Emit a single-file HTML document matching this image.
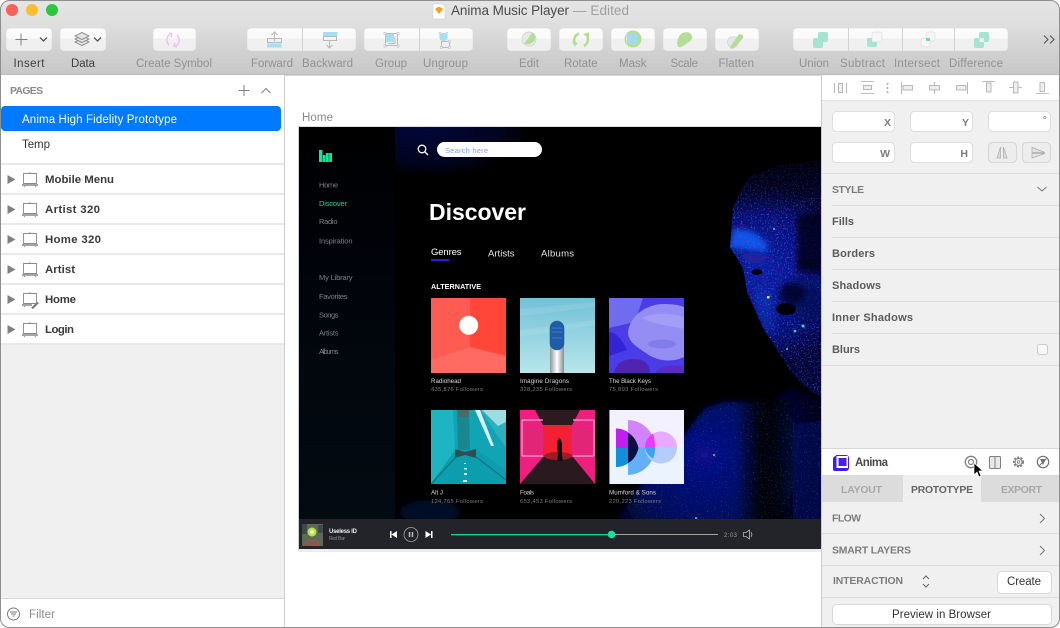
<!DOCTYPE html>
<html><head><meta charset="utf-8"><title>Anima Music Player</title>
<style>
html,body{margin:0;padding:0;background:#fff;width:1060px;height:628px;overflow:hidden}
svg{display:block}
text{font-family:"Liberation Sans",sans-serif;white-space:pre}
.tl{font-size:11.5px;fill:#929292}
.td{font-size:11.5px;fill:#3e3e3e}
.ly{font-size:11.4px;font-weight:bold;fill:#3a3a3a}
.sec{font-size:10.4px;font-weight:bold;fill:#7c7c7c}
.rw{font-size:11px;font-weight:bold;fill:#5a5a5a}
.nav{font-size:7.5px;fill:#7d8288}
.nm{font-size:6.2px;fill:#d8d8d8}
.fo{font-size:5.8px;fill:#7e7e7e}
.inp{font-size:10.5px;font-weight:bold;fill:#7c7c7c;text-anchor:end}
</style></head><body>
<svg width="1060" height="628" viewBox="0 0 1060 628" xmlns="http://www.w3.org/2000/svg">
<defs>
<clipPath id="win"><rect x="0" y="0" width="1060" height="628" rx="9"/></clipPath>
<clipPath id="ab"><rect x="299" y="127" width="522" height="392"/></clipPath>
<clipPath id="face"><polygon points="733,208 741,190 750,176 780,165 821,160 821,397 807,388 793,375 763,328 747,292 743,268 730,247"/></clipPath>
<clipPath id="body"><polygon points="625,519 650,480 680,440 705,408 723,402 775,402 790,387 821,399 821,519"/></clipPath>
<linearGradient id="tb" x1="0" y1="0" x2="0" y2="1"><stop offset="0" stop-color="#e5e5e5"/><stop offset=".35" stop-color="#dedede"/><stop offset=".7" stop-color="#d0d0d0"/><stop offset="1" stop-color="#c8c8c8"/></linearGradient>
<linearGradient id="btn" x1="0" y1="0" x2="0" y2="1"><stop offset="0" stop-color="#fbfbfb"/><stop offset=".45" stop-color="#fafafa"/><stop offset=".46" stop-color="#f0f0f0"/><stop offset="1" stop-color="#efefef"/></linearGradient>
<linearGradient id="side" x1="0" y1="0" x2="0" y2="1"><stop offset="0" stop-color="#000"/><stop offset=".35" stop-color="#01030a"/><stop offset="1" stop-color="#030b12"/></linearGradient>
<radialGradient id="blob" cx=".25" cy="0" r=".8"><stop offset="0" stop-color="#02063a"/><stop offset=".7" stop-color="#010420"/><stop offset="1" stop-color="#000"/></radialGradient>
<linearGradient id="sky" x1="0" y1="0" x2="0" y2="1"><stop offset="0" stop-color="#72c0d8"/><stop offset="1" stop-color="#b8e6ea"/></linearGradient>
<linearGradient id="cyl" x1="0" y1="0" x2="1" y2="0"><stop offset="0" stop-color="#8d9698"/><stop offset=".5" stop-color="#fff"/><stop offset="1" stop-color="#8a8a8a"/></linearGradient>
<radialGradient id="fg" gradientUnits="userSpaceOnUse" cx="762" cy="275" r="90"><stop offset="0" stop-color="#0a1fa8"/><stop offset=".65" stop-color="#06107a"/><stop offset="1" stop-color="#020538"/></radialGradient>
<radialGradient id="bg" gradientUnits="userSpaceOnUse" cx="705" cy="455" r="115"><stop offset="0" stop-color="#07128a"/><stop offset=".6" stop-color="#040b5c"/><stop offset="1" stop-color="#01031a"/></radialGradient>
<linearGradient id="sh" x1="0" y1="0" x2="1" y2="0"><stop offset="0" stop-color="#000" stop-opacity="0"/><stop offset=".45" stop-color="#000" stop-opacity=".9"/><stop offset=".75" stop-color="#000" stop-opacity=".8"/><stop offset="1" stop-color="#000" stop-opacity=".2"/></linearGradient>
<linearGradient id="topf" x1="0" y1="0" x2="0" y2="1"><stop offset="0" stop-color="#000" stop-opacity=".85"/><stop offset=".6" stop-color="#000" stop-opacity=".4"/><stop offset="1" stop-color="#000" stop-opacity="0"/></linearGradient>
<filter id="s1" x="0" y="0" width="100%" height="100%" color-interpolation-filters="sRGB"><feTurbulence type="fractalNoise" baseFrequency=".7" numOctaves="1" seed="4"/><feColorMatrix values="0 0 0 0 .15 0 0 0 0 .45 0 0 0 0 1 10 0 0 0 -6.2"/></filter>
<filter id="s2" x="0" y="0" width="100%" height="100%" color-interpolation-filters="sRGB"><feTurbulence type="fractalNoise" baseFrequency=".75" numOctaves="1" seed="11"/><feColorMatrix values="0 0 0 0 .65 0 0 0 0 .1 0 0 0 0 .8 12 0 0 0 -7.9"/></filter>
<filter id="s3" x="0" y="0" width="100%" height="100%" color-interpolation-filters="sRGB"><feTurbulence type="fractalNoise" baseFrequency=".8" numOctaves="1" seed="23"/><feColorMatrix values="0 0 0 0 .3 0 0 0 0 .8 0 0 0 0 .5 14 0 0 0 -10"/></filter>
<filter id="bl3"><feGaussianBlur stdDeviation="3"/></filter>
<filter id="bl6"><feGaussianBlur stdDeviation="6"/></filter>
</defs>

<g clip-path="url(#win)">
<rect width="1060" height="628" fill="#fff"/>

<!-- TITLE + TOOLBAR -->
<rect width="1060" height="75" fill="url(#tb)"/>
<rect y="74.500" width="1060" height="1" fill="#b2b2b2"/>
<circle cx="12" cy="10" r="6" fill="#fe5f57"/><circle cx="32" cy="10" r="6" fill="#febc2e"/><circle cx="52" cy="10" r="6" fill="#28c840"/>
<path d="M433 4h9l3 3v12h-12z" fill="#fff" stroke="#ccc" stroke-width=".5"/><path d="M435 9l3-2h2l3 2-4 5z" fill="#f8a024"/>
<text x="451" y="15" font-size="13.500" fill="#4b4b4b" textLength="118">Anima Music Player</text>
<text x="573" y="15" font-size="13.500" fill="#a0a0a0" textLength="56">— Edited</text>

<g fill="url(#btn)" stroke="#d6d6d6" stroke-width=".5">
<rect x="6" y="28" width="46" height="23" rx="4"/><rect x="60" y="28" width="46" height="23" rx="4"/>
<rect x="153" y="28" width="43" height="23" rx="4"/>
<rect x="247" y="28" width="109" height="23" rx="4"/><rect x="364" y="28" width="109" height="23" rx="4"/>
<rect x="507" y="28" width="44" height="23" rx="4"/><rect x="559" y="28" width="44" height="23" rx="4"/><rect x="611" y="28" width="44" height="23" rx="4"/><rect x="663" y="28" width="44" height="23" rx="4"/><rect x="715" y="28" width="44" height="23" rx="4"/>
<rect x="793" y="28" width="215" height="23" rx="4"/>
</g>
<g stroke="#d2d2d2" stroke-width="1"><path d="M302.500 28v23M419.500 28v23M848.500 28v23M902.500 28v23M954.500 28v23"/></g>

<!-- toolbar icons -->
<path d="M21 33.500v12M15.500 39.500h12" stroke="#808080" fill="none"/>
<path d="M40 37.500l3.500 3.500 3.500-3.500M94 37.500l3.500 3.500 3.500-3.500" stroke="#555" stroke-width="1.300" fill="none"/>
<g fill="#e4e4e4" stroke="#808080" stroke-width=".8"><path d="M75 42l7 3.500 7-3.500-7-3.500z"/><path d="M75 39l7 3.500 7-3.500-7-3.500z"/><path d="M75 36l7 3.500 7-3.500-7-3.500z"/></g>
<g fill="none" stroke="#eebcf4" stroke-width="1.300"><path d="M170 34c-4 3-4 8-1 11M176 46c4-3 4-8 1-11"/><path d="M169 33l3 1-1 3M177 47l-3-1 1-3"/></g>
<g fill="none" stroke="#b8b8b8"><path d="M274.500 41v-9M271.500 35l3-3 3 3M267.500 38.500h14v4h-14z"/><path d="M329.500 48v-7M326.500 45l3 3 3-3M323.500 36.500h13v4h-13z"/></g>
<rect x="267" y="43.500" width="14.500" height="4" fill="#a6dff2"/><rect x="323" y="32" width="14.500" height="4" fill="#a6dff2"/>
<g fill="none" stroke="#bcbcbc"><rect x="385.500" y="33.500" width="12" height="12"/><path d="M388 43.500h7v-7"/></g><rect x="386" y="34" width="8" height="8" fill="#a6dff2"/>
<g fill="#fff" stroke="#b8b8b8" stroke-width=".6"><rect x="384" y="32.500" width="2" height="2"/><rect x="397" y="32.500" width="2" height="2"/><rect x="384" y="45" width="2" height="2"/><rect x="397" y="45" width="2" height="2"/></g>
<rect x="441.500" y="41.500" width="8" height="6" fill="none" stroke="#bcbcbc"/><circle cx="443.500" cy="37" r="4.200" fill="#a6dff2"/>
<g fill="#fff" stroke="#b8b8b8" stroke-width=".5"><rect x="439" y="32.500" width="1.800" height="1.800"/><rect x="446" y="32.500" width="1.800" height="1.800"/><rect x="448.500" y="40.500" width="1.800" height="1.800"/><rect x="448.500" y="46.500" width="1.800" height="1.800"/><rect x="440.500" y="46.500" width="1.800" height="1.800"/></g>
<circle cx="529" cy="39" r="7" fill="#e8e8e8" stroke="#ccc" stroke-width=".7"/><path d="M524 44l8-11c2 0 4 3 3 6-1 4-6 6-11 5z" fill="#b4dd96"/>
<g fill="none" stroke="#b4dd96" stroke-width="2.600"><path d="M579 33.500c-4.500 2-6 6-4 10"/><path d="M584 46c3.500-2 5-6 3-11"/></g><path d="M572 41.500l6 1.500-3.500 3.500zM583 34.500l6-2.500 0 6z" fill="#b4dd96"/>
<circle cx="633" cy="39" r="8.500" fill="#b4dd96"/><rect x="626" y="34" width="3" height="9" fill="#ddd"/><rect x="627" y="34" width="10" height="10" rx="1" fill="#a2d9f4"/>
<path d="M678 47c-2-4 0-10 3-13 4-3 10-2 11 2 1 4-3 6-6 8-3 2-5 4-8 3z" fill="#b4dd96"/>
<circle cx="733" cy="42" r="5.500" fill="#e6e6e6" stroke="#ccc" stroke-width=".6"/><path d="M730 47l9-13c3 0 5 2 4 4l-9 10c-2 1-4 1-4-1z" fill="#b4dd96"/>
<path d="M815 38h3v-4a2 2 0 0 1 2-2h6a2 2 0 0 1 2 2v6a2 2 0 0 1-2 2h-3v4a2 2 0 0 1-2 2h-6a2 2 0 0 1-2-2v-6a2 2 0 0 1 2-2z" fill="#a6e4d2"/>
<rect x="872" y="32" width="10" height="10" rx="2" fill="#f6f6f6" stroke="#ddd" stroke-width=".7"/><path d="M868 38h4v4h5v3a2 2 0 0 1-2 2h-6a2 2 0 0 1-2-2v-6a1 1 0 0 1 1-1z" fill="#a6e4d2"/>
<rect x="926" y="32" width="9" height="9" rx="2" fill="#f6f6f6" stroke="#ddd" stroke-width=".7"/><rect x="921" y="38" width="9" height="9" rx="2" fill="#f6f6f6" stroke="#ddd" stroke-width=".7"/><rect x="926" y="38" width="4" height="3" fill="#7fd4bd"/>
<path d="M975 38h4v-4a2 2 0 0 1 2-2h6a2 2 0 0 1 2 2v6a2 2 0 0 1-2 2h-3v4a2 2 0 0 1-2 2h-6a2 2 0 0 1-2-2v-6a2 2 0 0 1 1-2z" fill="#a6e4d2"/><rect x="979.500" y="38" width="4.500" height="4" fill="#eee"/>
<path d="M1044 35.500l4 4-4 4M1050 35.500l4 4-4 4" fill="none" stroke="#555" stroke-width="1.100"/>

<!-- toolbar labels -->
<text class="td" x="13.500" y="67" textLength="31">Insert</text><text class="td" x="71" y="67" textLength="24">Data</text>
<text class="tl" x="136" y="67" textLength="76">Create Symbol</text><text class="tl" x="251" y="67" textLength="42">Forward</text><text class="tl" x="302" y="67" textLength="51">Backward</text><text class="tl" x="375" y="67" textLength="32">Group</text><text class="tl" x="423" y="67" textLength="45">Ungroup</text>
<text class="tl" x="519" y="67" textLength="20">Edit</text><text class="tl" x="564" y="67" textLength="33.500">Rotate</text><text class="tl" x="619" y="67" textLength="27.500">Mask</text><text class="tl" x="670.500" y="67" textLength="27.500">Scale</text><text class="tl" x="718.500" y="67" textLength="35.500">Flatten</text>
<text class="tl" x="799" y="67" textLength="30">Union</text><text class="tl" x="840" y="67" textLength="45">Subtract</text><text class="tl" x="894" y="67" textLength="46">Intersect</text><text class="tl" x="949" y="67" textLength="54">Difference</text>

<!-- LEFT PANEL -->
<rect x="0" y="75" width="285" height="553" fill="#fff"/>
<rect x="1" y="345" width="283" height="253" fill="#f0f0f0"/>
<rect x="284" y="75" width="1" height="553" fill="#cdcdcd"/>
<text x="10" y="94" font-size="10.400" font-weight="bold" fill="#8a8a8a" textLength="33">PAGES</text>
<path d="M244 85v11M238.500 90.500h11" stroke="#7f7f7f" fill="none"/><path d="M261.500 93l4.500-4.500 4.500 4.500" stroke="#7f7f7f" fill="none"/>
<rect x="1" y="106" width="280" height="25" rx="4" fill="#007aff"/>
<text x="22" y="123" font-size="11.500" fill="#fff" textLength="155">Anima High Fidelity Prototype</text>
<text x="22" y="148" font-size="11.500" fill="#333" textLength="28">Temp</text>
<g fill="#e9e9e9"><rect x="1" y="163" width="283" height="2"/><rect x="1" y="193" width="283" height="2"/><rect x="1" y="223" width="283" height="2"/><rect x="1" y="253" width="283" height="2"/><rect x="1" y="283" width="283" height="2"/><rect x="1" y="313" width="283" height="2"/><rect x="1" y="343" width="283" height="2"/></g>
<g fill="#808080"><path d="M7.500 175v9l8-4.500z"/><path d="M7.500 205v9l8-4.500z"/><path d="M7.500 235v9l8-4.500z"/><path d="M7.500 265v9l8-4.500z"/><path d="M7.500 295v9l8-4.500z"/><path d="M7.500 325v9l8-4.500z"/></g>
<g fill="none" stroke="#8a8a8a" stroke-width=".9">
<path d="M23.500 173.500h13v10h-13zM30 172v1.500M25 185.500l-1 1.500M35 185.500l1 1.500"/>
<path d="M23.500 203.500h13v10h-13zM30 202v1.500M25 215.500l-1 1.500M35 215.500l1 1.500"/>
<path d="M23.500 233.500h13v10h-13zM30 232v1.500M25 245.500l-1 1.500M35 245.500l1 1.500"/>
<path d="M23.500 263.500h13v10h-13zM30 262v1.500M25 275.500l-1 1.500M35 275.500l1 1.500"/>
<path d="M23.500 293.500h13v10h-13zM30 292v1.500M25 305.500l-1 1.500"/>
<path d="M23.500 323.500h13v10h-13zM30 322v1.500M25 335.500l-1 1.500M35 335.500l1 1.500"/>
</g>
<g fill="#a4a4a4"><rect x="22" y="184" width="16" height="2"/><rect x="22" y="214" width="16" height="2"/><rect x="22" y="244" width="16" height="2"/><rect x="22" y="274" width="16" height="2"/><rect x="22" y="304" width="10" height="2"/><rect x="22" y="334" width="16" height="2"/></g>
<path d="M31 308l6-6 2 1-6 6z" fill="#777"/>
<text class="ly" x="45" y="183" textLength="69">Mobile Menu</text>
<text class="ly" x="45" y="213" textLength="55">Artist 320</text>
<text class="ly" x="45" y="243" textLength="56">Home 320</text>
<text class="ly" x="45" y="273" textLength="30">Artist</text>
<text class="ly" x="45" y="303" textLength="31">Home</text>
<text class="ly" x="45" y="333" textLength="29">Login</text>
<rect x="1" y="598" width="283" height="1" fill="#d9d9d9"/>
<circle cx="13.500" cy="614" r="6" fill="none" stroke="#7c7c7c"/><path d="M10 612h7M11 614h5M12.500 616h2" stroke="#7c7c7c" fill="none"/>
<text x="29" y="618" font-size="11.500" fill="#8a8a8a" textLength="26">Filter</text>

<!-- CANVAS -->
<text x="302" y="121" font-size="11.500" fill="#8a8a8a" textLength="31">Home</text>
<rect x="298" y="549" width="523" height="3" fill="#ececec"/>
<rect x="298" y="126" width="523" height="1" fill="#ddd"/>
<rect x="298" y="126" width="1" height="424" fill="#d0d0d0"/>

<!-- ARTBOARD -->
<rect x="299" y="127" width="522" height="392" fill="#000"/>
<g clip-path="url(#ab)">
<rect x="299" y="127" width="96" height="392" fill="url(#side)"/>
<rect x="395" y="127" width="130" height="62" fill="url(#blob)"/>
<ellipse cx="430" cy="512" rx="30" ry="12" fill="#030a26" filter="url(#bl3)"/>
<!-- body -->
<polygon points="612,525 645,480 680,440 705,408 723,402 775,402 790,387 825,399 825,525" fill="url(#bg)" filter="url(#bl3)"/>
<rect x="735" y="400" width="58" height="120" fill="url(#sh)"/>
<path d="M793 425l28-5v99h-28z" fill="#030a50" opacity=".8"/>
<g clip-path="url(#body)">
<rect x="610" y="400" width="215" height="120" filter="url(#s1)" opacity=".2"/>
<rect x="610" y="400" width="215" height="120" filter="url(#s3)" opacity=".6"/>
</g>
<!-- face -->
<g clip-path="url(#face)">
<rect x="725" y="155" width="100" height="245" fill="url(#fg)"/>
<path d="M728 248l6-20 20 4 14 12-2 8-18-2z" fill="#0a52e8" filter="url(#bl3)"/>
<path d="M755 290l14 0 6 40-10 5z" fill="#0a40c8" opacity=".6" filter="url(#bl6)"/>
<rect x="725" y="155" width="100" height="245" filter="url(#s1)" opacity=".7"/>
<rect x="725" y="155" width="100" height="245" filter="url(#s2)" opacity=".7"/>
<rect x="725" y="155" width="100" height="245" filter="url(#s3)" opacity=".75"/>
<rect x="725" y="155" width="100" height="60" fill="url(#topf)"/>
<path d="M797 215l26-5v65l-26-3z" fill="#010318" opacity=".8" filter="url(#bl3)"/>
<path d="M786 280h38v40h-26z" fill="#020748" opacity=".6" filter="url(#bl6)"/>
<path d="M741 255c8-3 20-2 26 2-4 8-18 10-26-2z" fill="#25259a" opacity=".85"/>
<ellipse cx="757" cy="272" rx="5.500" ry="3" fill="#01020f"/>
<ellipse cx="786" cy="309" rx="10" ry="6" fill="#000" opacity=".92"/>
<ellipse cx="792" cy="294" rx="13" ry="11" fill="#020420" opacity=".75" filter="url(#bl3)"/>
<ellipse cx="809" cy="262" rx="12" ry="3.500" fill="#04051c" opacity=".8"/>
</g>
<g fill="#25e8a8"><circle cx="803" cy="326" r="1.500"/><circle cx="795" cy="331" r="1.300"/><circle cx="774" cy="229" r="1"/><circle cx="787" cy="349" r="1"/><circle cx="714" cy="455" r="1"/><circle cx="696" cy="518" r="1"/></g>
<rect x="767" y="296" width="2.500" height="2.500" fill="#d8e050"/>

<!-- sidebar -->
<g fill="#12e59c"><rect x="319" y="150" width="3.400" height="12"/><rect x="322.800" y="155" width="2.600" height="7"/><rect x="325.800" y="153" width="3" height="9"/><rect x="329.200" y="153" width="2.800" height="9"/></g>
<text class="nav" x="319" y="187.500" textLength="19">Home</text>
<text class="nav" x="319" y="206" style="fill:#17d596" textLength="28">Discover</text>
<text class="nav" x="319" y="224" textLength="18.500">Radio</text>
<text class="nav" x="319" y="243.500" textLength="33.500">Inspiration</text>
<text class="nav" x="319" y="280" textLength="33.500">My Library</text>
<text class="nav" x="319" y="299" textLength="28.500">Favorites</text>
<text class="nav" x="319" y="317.500" textLength="19.500">Songs</text>
<text class="nav" x="319" y="335.500" textLength="19.500">Artists</text>
<text class="nav" x="319" y="354" textLength="19.500">Albums</text>

<!-- search -->
<circle cx="422" cy="149" r="3.800" fill="none" stroke="#fff" stroke-width="1.300"/><path d="M425 152l3 3" stroke="#fff" stroke-width="1.400"/>
<rect x="437" y="142" width="105" height="15" rx="7.500" fill="#fff"/>
<text x="445" y="153" font-size="7.500" fill="#80a0e8" textLength="43">Search here</text>
<text x="429" y="220" font-size="23" font-weight="bold" fill="#fff" textLength="97">Discover</text>
<text x="431" y="255" font-size="9.500" fill="#fff" textLength="30.500">Genres</text>
<rect x="431" y="259" width="18" height="2" fill="#2a18d8"/>
<text x="488" y="256.500" font-size="9.500" fill="#e8e8e8" textLength="26.500">Artists</text>
<text x="541" y="256.500" font-size="9.500" fill="#e8e8e8" textLength="33">Albums</text>
<text x="431" y="289" font-size="7.200" font-weight="bold" fill="#fff" textLength="50">ALTERNATIVE</text>

<!-- album 1 -->
<rect x="431" y="298" width="75" height="75" fill="#ff5b50"/>
<rect x="470" y="298" width="36" height="60" fill="#ff4639"/>
<path d="M431 360l39-13 36 9v17h-75z" fill="#ff6b62"/>
<circle cx="468.700" cy="325.300" r="9.500" fill="#fff"/>
<!-- album 2 -->
<rect x="520" y="298" width="75" height="75" fill="url(#sky)"/>
<path d="M520 309l75-7v5l-75 9zM520 330l75-10v5l-75 12z" fill="#fff" opacity=".1"/>
<rect x="550" y="345" width="14" height="28" fill="url(#cyl)"/>
<rect x="550" y="321" width="14" height="29" rx="7" fill="#1f5ba8" stroke="#32628c" stroke-width=".6"/>
<path d="M552 328h10M552 332h10M552 338h10" stroke="#6f9cd0" stroke-width=".6"/>
<!-- album 3 -->
<rect x="609" y="298" width="75" height="75" fill="#4a3ce6"/>
<path d="M609 298h34l-8 24-26 6z" fill="#6f6cf0"/>
<path d="M609 332c8 0 14 10 18 18l-18 6z" fill="#3424d8"/>
<path d="M628 332c2-16 18-28 36-28 8 0 15 1 20 3v50c-12 6-28 4-38-4-11-7-18-12-18-21z" fill="#948df4"/>
<path d="M642 318c12-6 28-5 42-1v12c-16-4-30-4-42-11z" fill="#a8a4f7" opacity=".7"/>
<ellipse cx="662" cy="344" rx="14" ry="4.500" fill="#837de9"/>
<path d="M614 373c2-10 10-14 20-14s16 5 16 14z" fill="#4e24b0"/>
<path d="M655 373c2-5 12-9 29-7v7z" fill="#5a2cc4"/>
<!-- album 4 -->
<rect x="431" y="410" width="75" height="74" fill="#10a4b4"/>
<path d="M431 410h22l2 40-6 10-18 24z" fill="#1eb4c2"/>
<path d="M431 484l24-34 22 0 29 20v14z" fill="#0c9eae"/>
<path d="M480 410h26v38z" fill="#2cb0bd"/>
<path d="M475 410h5l14 36-3 0z" fill="#d8f2f4"/>
<path d="M482 410h24v12l-8 4z" fill="#b8e8ea" opacity=".8"/>
<path d="M457 410h12l1 40h-12z" fill="#1a868e"/><path d="M458 410h11v7h-11z" fill="#4e6a68"/>
<path d="M455 449l10 3 11-3v9l-11-3-10 3z" fill="#374a50"/>
<path d="M431 484l26-28M506 480l-31-24" stroke="#126a72" stroke-width="1" fill="none"/>
<g fill="#c6eef0"><rect x="464" y="463" width="2" height="1"/><rect x="464" y="468" width="3" height="1.500"/><rect x="464" y="473" width="3" height="2"/><rect x="463" y="480" width="4" height="2"/></g>
<!-- album 5 -->
<rect x="520" y="410" width="75" height="74" fill="#ef1f80"/>
<path d="M535 410h45l-8 15h-29z" fill="#2b1a20"/>
<path d="M543 457h30l22 27h-75z" fill="#2a1a20"/>
<rect x="543" y="425" width="29" height="32" fill="#f41f33"/>
<ellipse cx="533" cy="440" rx="12" ry="15" fill="#d82a70" opacity=".6"/><ellipse cx="582" cy="440" rx="12" ry="15" fill="#d82a70" opacity=".6"/>
<ellipse cx="558" cy="456" rx="14" ry="4" fill="#a01a28"/>
<path d="M522 420h21M522 420v36M522 456h21M594 420h-21M594 420v36M594 456h-21" fill="none" stroke="#ffa4c8" stroke-width="1.300"/>
<path d="M557 446c0-4 1-7 2-8 2 1 3 4 3 8v9l1 6h-6l1-6z" fill="#0e0c10"/>
<!-- album 6 -->
<rect x="609" y="410" width="75" height="74" fill="#f3f1ff"/><rect x="609" y="447" width="75" height="37" fill="#ebf3ff"/>
<rect x="609" y="410" width="1" height="74" fill="#8d8d98"/>
<path d="M628 420A27.500 27.500 0 0 1 655 447.500H628Z" fill="#d184ff"/><path d="M628 475A27.500 27.500 0 0 0 655 447.500H628Z" fill="#63b0f8"/>
<path d="M616 428.500c11 0 19 8 22.500 19.500h-22.500z" fill="#c31df0"/><path d="M616 467c11 0 19-8 22.500-19h-22.500z" fill="#138fd8"/>
<path d="M628 433c6 3 9 9 10.500 15-1.500 6-4.500 12-10.500 15z" fill="#0a1040"/>
<circle cx="661" cy="447.500" r="16" fill="#e8aaff"/><path d="M645 447.500a16 16 0 0 0 32 0z" fill="#b4cdff"/>
<path d="M645 447.500a16 16 0 0 1 8-14c1.500 4 2 9 2 14z" fill="#e83cfa"/>
<path d="M645 447.500h10c0 4-.5 8-2 11-4-2-7-6-8-11z" fill="#3ba0fa"/>

<!-- captions -->
<text class="nm" x="431" y="383" textLength="30">Radiohead</text><text class="fo" x="431" y="391" textLength="52">435,876 Followers</text>
<text class="nm" x="520" y="383" textLength="49">Imagine Dragons</text><text class="fo" x="520" y="391" textLength="52">328,235 Followers</text>
<text class="nm" x="609" y="383" textLength="42">The Black Keys</text><text class="fo" x="609" y="391" textLength="49">75,893 Followers</text>
<text class="nm" x="431" y="494.500" textLength="12">Alt J</text><text class="fo" x="431" y="503" textLength="52">124,765 Followers</text>
<text class="nm" x="520" y="494.500" textLength="14">Foals</text><text class="fo" x="520" y="503" textLength="52">653,453 Followers</text>
<text class="nm" x="609" y="494.500" textLength="47">Mumford &amp; Sons</text><text class="fo" x="609" y="503" textLength="52">220,223 Followers</text>
</g>

<!-- player -->
<rect x="299" y="519" width="522" height="30" fill="#22242a"/>
<rect x="302" y="524" width="21" height="22" fill="#5d6a56"/><circle cx="312" cy="532" r="4.500" fill="#b8e04c"/><circle cx="312" cy="532" r="1.800" fill="#f6ffc8"/><path d="M306 540h13v6h-13z" fill="#8a5a50"/><path d="M302 524h5v10h-5zM318 525h5v8h-5z" fill="#3f4a48"/>
<text x="329" y="533" font-size="6" font-weight="bold" fill="#ececec" textLength="28">Useless ID</text>
<text x="329" y="540" font-size="5" fill="#8b8b8b" textLength="16">Red Bar</text>
<path d="M390 531h1.500v7H390zM391.500 534.500l5.500-3.500v7z" fill="#fff"/>
<circle cx="411" cy="534.500" r="7" fill="none" stroke="#a4a4a4" stroke-width=".8"/><path d="M408.800 532h1.500v5h-1.500zM411.700 532h1.500v5h-1.500z" fill="#bbb"/>
<path d="M431 531h1.500v7H431zM431 534.500l-5.500-3.500v7z" fill="#fff"/>
<rect x="451" y="534" width="267" height="1" fill="#a4a4a4"/>
<rect x="451" y="534" width="161" height="1.300" fill="#12d894"/>
<circle cx="611.500" cy="534.500" r="3.800" fill="#0fe69c"/>
<text x="724" y="537" font-size="6" fill="#9a9a9a" textLength="13">2:03</text>
<path d="M743.500 532.500h2.500l3.500-2.500v9l-3.500-2.500h-2.500z" fill="none" stroke="#b8b8b8" stroke-width=".8"/><path d="M751 532l1 2.500-1 2.500" fill="none" stroke="#b8b8b8" stroke-width=".8"/>

<!-- RIGHT PANEL -->
<rect x="821" y="75" width="239" height="553" fill="#f0f0f0"/>
<rect x="821" y="75" width="1" height="553" fill="#cbcbcb"/>
<rect x="822" y="75.500" width="238" height="25" fill="#fff"/>
<rect x="822" y="100" width="238" height="1" fill="#e0e0e0"/>
<g fill="none" stroke="#a8a8a8" stroke-width=".8">
<path d="M834.500 83v10M846.500 83v10"/><rect x="838.500" y="83.500" width="4" height="9" fill="#eee"/>
<path d="M861 81.500h13M861 93.500h13"/><rect x="863.500" y="85.500" width="8" height="4" fill="#eee"/>
<path d="M901.500 82v12"/><rect x="903" y="85.500" width="9.500" height="4.500" fill="#eee"/>
<path d="M934.500 82v12"/><rect x="929.500" y="85.500" width="10" height="4.500" fill="#eee"/>
<path d="M967.500 82v12"/><rect x="956.500" y="85.500" width="9.500" height="4.500" fill="#eee"/>
<path d="M982 81.500h13"/><rect x="986.500" y="83" width="4.500" height="9" fill="#eee"/>
<path d="M1009 87.500h13"/><rect x="1013.500" y="82" width="4.500" height="11" fill="#eee"/>
<path d="M1036 93.500h13"/><rect x="1040" y="82.500" width="4.500" height="9" fill="#eee"/>
</g>
<g fill="#a8a8a8"><circle cx="887.500" cy="84" r="1"/><circle cx="887.500" cy="88" r="1"/><circle cx="887.500" cy="92" r="1"/></g>

<g fill="#fff" stroke="#d8d8d8" stroke-width=".8">
<rect x="832.500" y="111.500" width="62" height="20" rx="4"/><rect x="910.500" y="111.500" width="62" height="20" rx="4"/><rect x="988.500" y="111.500" width="62" height="20" rx="4"/>
<rect x="832.500" y="142.500" width="62" height="20" rx="4"/><rect x="910.500" y="142.500" width="62" height="20" rx="4"/>
</g>
<g fill="#ededed" stroke="#cfcfcf" stroke-width=".8"><rect x="988.500" y="142.500" width="28" height="20" rx="4"/><rect x="1022.500" y="142.500" width="28" height="20" rx="4"/></g>
<text class="inp" x="891" y="126">X</text><text class="inp" x="969" y="126">Y</text><text x="1047" y="124" font-size="11" fill="#777" text-anchor="end">°</text>
<text class="inp" x="890" y="157">W</text><text class="inp" x="968" y="157">H</text>
<path d="M1000.500 147l-3.500 11h3.500zM1003.500 147l3.500 11h-3.500z" fill="#dcdcdc" stroke="#aaa" stroke-width=".7"/>
<path d="M1032 147.500l13 5h-13zM1032 153.500h13l-13 4.500z" fill="#e4e4e4" stroke="#aaa" stroke-width=".7"/>

<g fill="#dedede"><rect x="822" y="173" width="238" height="1"/><rect x="832" y="205" width="228" height="1"/><rect x="832" y="237" width="228" height="1"/><rect x="832" y="269" width="228" height="1"/><rect x="832" y="301" width="228" height="1"/><rect x="832" y="333" width="228" height="1"/><rect x="822" y="365" width="238" height="1"/></g>
<text class="sec" x="832" y="193" textLength="32">STYLE</text>
<path d="M1037.500 187l4.500 4 4.500-4" fill="none" stroke="#777"/>
<text class="rw" x="832" y="225" textLength="22">Fills</text>
<text class="rw" x="832" y="257" textLength="43">Borders</text>
<text class="rw" x="832" y="289" textLength="49">Shadows</text>
<text class="rw" x="832" y="321" textLength="81">Inner Shadows</text>
<text class="rw" x="832" y="353" textLength="28">Blurs</text>
<rect x="1037.500" y="344.500" width="10" height="10" rx="2" fill="#f8f8f8" stroke="#ccc"/>

<rect x="822" y="448" width="238" height="1" fill="#d8d8d8"/>
<rect x="822" y="449" width="238" height="26" fill="#fff"/>
<path d="M833 459a3 3 0 0 1 3-3v-1h10a3 3 0 0 1 3 3v10a3 3 0 0 1-3 3h-11a2 2 0 0 1-2-2z" fill="#3d1de8"/>
<rect x="836.500" y="456" width="11.500" height="12" fill="#fff"/><rect x="838.500" y="458" width="8" height="8" fill="#4a1cf0"/>
<text x="855" y="466" font-size="11.500" font-weight="bold" fill="#4a4a4a" textLength="33">Anima</text>
<circle cx="971" cy="462" r="5.700" fill="none" stroke="#7f7f7f" stroke-width="1.300"/><circle cx="971" cy="462" r="2.500" fill="none" stroke="#7f7f7f" stroke-width="1.200"/>
<rect x="989.500" y="456.500" width="11" height="12" rx="1" fill="#e8e8e8" stroke="#7f7f7f"/><path d="M995 456.500v12" stroke="#7f7f7f"/>
<circle cx="1018.500" cy="462" r="4.500" fill="none" stroke="#7f7f7f" stroke-width="2" stroke-dasharray="2 1.300"/><circle cx="1018.500" cy="462" r="3.500" fill="none" stroke="#7f7f7f"/><circle cx="1018.500" cy="462" r="1.300" fill="none" stroke="#7f7f7f" stroke-width=".8"/>
<circle cx="1043" cy="462" r="5.700" fill="none" stroke="#707070" stroke-width="1.200"/><path d="M1040 459l6 0-3 6z" fill="#707070"/><path d="M1039.500 465.500l7-7" stroke="#707070"/>
<rect x="822" y="475" width="238" height="27" fill="#dcdcdc"/><rect x="903" y="475" width="78" height="27" fill="#efefef"/>
<text x="841" y="493" font-size="10.400" font-weight="bold" fill="#a8a8a8" textLength="41">LAYOUT</text>
<text x="911" y="493" font-size="10.400" font-weight="bold" fill="#666" textLength="62">PROTOTYPE</text>
<text x="1001" y="493" font-size="10.400" font-weight="bold" fill="#a8a8a8" textLength="41">EXPORT</text>
<g fill="#dcdcdc"><rect x="822" y="533" width="238" height="1"/><rect x="822" y="565" width="238" height="1"/><rect x="822" y="597" width="238" height="1"/></g>
<text class="sec" x="832" y="521.500" textLength="29">FLOW</text>
<path d="M1040 514l4.500 4.500-4.500 4.500M1040 546l4.500 4.500-4.500 4.500" fill="none" stroke="#777"/>
<text class="sec" x="832" y="553.500" textLength="79">SMART LAYERS</text>
<text class="sec" x="833" y="584" textLength="70">INTERACTION</text>
<path d="M923 579l3-3 3 3M923 584l3 3 3-3" fill="none" stroke="#666"/>
<rect x="997.500" y="571.500" width="54" height="22" rx="4" fill="#fff" stroke="#d8d8d8"/>
<text x="1007" y="585" font-size="11.500" fill="#333" textLength="34">Create</text>
<rect x="832.500" y="604.500" width="219" height="20" rx="4" fill="#fff" stroke="#d8d8d8"/>
<text x="892" y="618" font-size="11.500" fill="#333" textLength="99">Preview in Browser</text>

<path d="M974 463v12l3-3 2 5 2-1-2-5h4z" fill="#000" stroke="#fff" stroke-width=".7"/>
</g>
<rect x=".5" y=".5" width="1059" height="627" rx="9" fill="none" stroke="#8f8f8f"/>
</svg>
</body></html>
